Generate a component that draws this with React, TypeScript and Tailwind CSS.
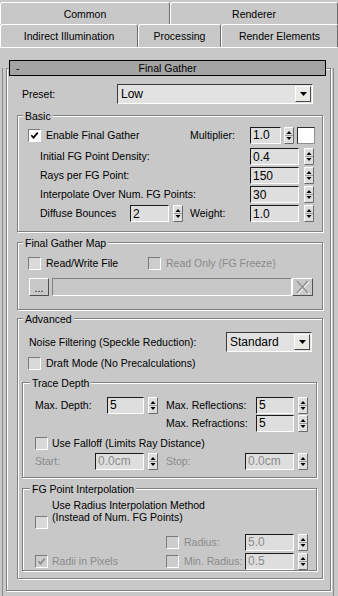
import React from "react";

function Spinner() {
  return (
    <svg width="10" height="17" viewBox="0 0 10 17" className="block shrink-0">
      <rect x="0" y="0" width="10" height="17" fill="#dedede" />
      <path d="M0.5 16.5 H9.5 V0.5" stroke="#6a6a6a" fill="none" />
      <path d="M0.5 16 V0.5 H9" stroke="#ffffff" fill="none" />
      <line x1="1" y1="8.5" x2="9" y2="8.5" stroke="#9a9a9a" />
      <polygon points="2.5,7 7.5,7 5,4" fill="#000" />
      <polygon points="2.5,10 7.5,10 5,13" fill="#000" />
    </svg>
  );
}

function Field({ w, value, disabled }: { w: string; value: string; disabled?: boolean }) {
  return (
    <div
      className={`${w} h-[17px] shrink-0 flex items-center pl-[2px] bg-[#dedede] border border-t-[#1a1a1a] border-l-[#1a1a1a] border-b-white border-r-white text-[12px] leading-[14px] ${
        disabled ? "text-[#8c8c8c]" : "text-black"
      }`}
    >
      {value}
    </div>
  );
}

function Check({ checked, disabled }: { checked?: boolean; disabled?: boolean }) {
  return (
    <div
      className={`w-[13px] h-[13px] shrink-0 flex items-center justify-center border border-t-[#7a7a7a] border-l-[#7a7a7a] border-b-white border-r-white ${
        disabled ? "bg-[#cdcdcd]" : checked ? "bg-white" : "bg-[#d9d9d9]"
      }`}
    >
      {checked && (
        <svg width="9" height="9" viewBox="0 0 9 9" className="block">
          <path d="M1.3 4.2 L3.5 6.6 L7.8 1.6" stroke={disabled ? "#8a8a8a" : "#000"} strokeWidth="1.7" fill="none" />
        </svg>
      )}
    </div>
  );
}

function Dropdown({ w, value }: { w: string; value: string }) {
  return (
    <div
      className={`${w} h-[20px] shrink-0 flex items-center pl-[3px] bg-[#e2e2e2] border border-t-[#3a3a3a] border-l-[#3a3a3a] border-b-white border-r-white text-[12px]`}
    >
      <span className="flex-1">{value}</span>
      <div className="w-[16px] h-[16px] mr-[1px] bg-[#e9e9e5] border border-t-white border-l-white border-b-[#4a4a4a] border-r-[#4a4a4a] flex items-center justify-center">
        <svg width="7" height="4" viewBox="0 0 7 4" className="block">
          <polygon points="0,0 7,0 3.5,4" fill="#000" />
        </svg>
      </div>
    </div>
  );
}

function Group({
  label,
  className,
  labelMl,
  children,
}: {
  label: string;
  className: string;
  labelMl: string;
  children: React.ReactNode;
}) {
  return (
    <div className={`border border-[#808080] shadow-[1px_1px_0_#fff,inset_1px_1px_0_#fff] ${className}`}>
      <div className="h-[14px] -mt-[7px] flex">
        <span className={`${labelMl} px-[2px] bg-[#c8c8c8] leading-[14px]`}>{label}</span>
      </div>
      {children}
    </div>
  );
}

const tab =
  "h-full flex items-center justify-center border-t border-l border-t-white border-l-white border-r border-r-[#6a6a6a] rounded-tl-[3px] rounded-tr-[3px]";

export default function App() {
  return (
    <div className="w-[338px] h-[596px] bg-[#c8c8c8] overflow-hidden text-[10.5px] leading-[13px] text-black font-['Liberation_Sans',Arial,sans-serif]">
      {/* Tabs row 1 */}
      <div className="flex h-[24px] pt-[2px]">
        <div className={`${tab} w-[170px] pt-[2px]`}>Common</div>
        <div className={`${tab} flex-1 pt-[2px]`}>Renderer</div>
      </div>
      {/* Tabs row 2 */}
      <div className="flex h-[23px]">
        <div className={`${tab} w-[138px] relative z-10 bg-[#c8c8c8] h-[24px]`}>Indirect Illumination</div>
        <div className={`${tab} w-[83px]`}>Processing</div>
        <div className={`${tab} flex-1`}>Render Elements</div>
      </div>

      {/* Panel */}
      <div className="border-t border-t-white h-[549px]">
        <div className="ml-[2px] w-[332px] h-full border-l border-r border-[#8a8a8a]">
          {/* Rollout frame */}
          <div className="mt-[20px] ml-[3px] w-[325px] border border-[#808080] shadow-[1px_1px_0_#fff,inset_1px_1px_0_#fff] pb-[11px]">
            {/* Header */}
            <div className="-mt-[9px] ml-[2px] w-[317px] h-[16px] bg-[#a4a4a4] border border-black flex items-center">
              <div className="w-[40px] pl-[6px]">-</div>
              <div className="flex-1 text-center">Final Gather</div>
              <div className="w-[40px]" />
            </div>

            {/* Preset */}
            <div className="mt-[8px] h-[20px] flex items-center">
              <div className="w-[110px] pl-[15px]">Preset:</div>
              <Dropdown w="w-[196px]" value="Low" />
            </div>

            {/* Basic */}
            <Group label="Basic" labelMl="ml-[5px]" className="mt-[11px] ml-[10px] w-[306px] pb-[8px]">
              <div className="mt-[2px] h-[20px] flex items-center">
                <div className="w-[172px] pl-[10px] flex items-center gap-[5px]">
                  <Check checked />
                  <span>Enable Final Gather</span>
                </div>
                <div className="w-[60px]">Multiplier:</div>
                <Field w="w-[31px]" value="1.0" />
                <div className="ml-[3px]">
                  <Spinner />
                </div>
                <div className="ml-[3px] w-[18px] h-[17px] bg-white border border-t-[#303030] border-l-[#303030] border-b-[#909090] border-r-[#909090]" />
              </div>
              <div className="mt-[2px] h-[19px] flex items-center">
                <div className="w-[232px] pl-[22px]">Initial FG Point Density:</div>
                <Field w="w-[49px]" value="0.4" />
                <div className="ml-[5px]">
                  <Spinner />
                </div>
              </div>
              <div className="h-[19px] flex items-center">
                <div className="w-[232px] pl-[22px]">Rays per FG Point:</div>
                <Field w="w-[49px]" value="150" />
                <div className="ml-[5px]">
                  <Spinner />
                </div>
              </div>
              <div className="h-[19px] flex items-center">
                <div className="w-[232px] pl-[22px]">Interpolate Over Num. FG Points:</div>
                <Field w="w-[49px]" value="30" />
                <div className="ml-[5px]">
                  <Spinner />
                </div>
              </div>
              <div className="h-[19px] flex items-center">
                <div className="w-[112px] pl-[22px]">Diffuse Bounces</div>
                <Field w="w-[39px]" value="2" />
                <div className="ml-[4px]">
                  <Spinner />
                </div>
                <div className="ml-[7px] w-[60px]">Weight:</div>
                <Field w="w-[49px]" value="1.0" />
                <div className="ml-[5px]">
                  <Spinner />
                </div>
              </div>
            </Group>

            {/* Final Gather Map */}
            <Group label="Final Gather Map" labelMl="ml-[5px]" className="mt-[10px] ml-[10px] w-[306px] pb-[13px]">
              <div className="mt-[4px] h-[18px] flex items-center">
                <div className="w-[130px] pl-[10px] flex items-center gap-[5px]">
                  <Check />
                  <span>Read/Write File</span>
                </div>
                <div className="flex items-center gap-[5px] text-[#8a8a8a]">
                  <Check disabled />
                  <span>Read Only (FG Freeze)</span>
                </div>
              </div>
              <div className="mt-[6px] h-[18px] flex items-center pl-[11px]">
                <div className="w-[20px] h-[18px] border border-t-white border-l-white border-b-[#505050] border-r-[#505050] flex items-end justify-center pb-[2px] leading-[10px]">
                  ...
                </div>
                <div className="ml-[3px] w-[240px] h-[18px] border border-t-[#808080] border-l-[#808080] border-b-white border-r-white bg-[#c8c8c8]" />
                <div className="w-[21px] h-[18px] border border-t-white border-l-white border-b-[#505050] border-r-[#505050] flex items-center justify-center">
                  <svg width="15" height="14" viewBox="0 0 15 14" className="block">
                    <path d="M2 1 L13 13 M13 1 L2 13" stroke="#ffffff" strokeWidth="1.4" transform="translate(0.8,0.8)" />
                    <path d="M2 1 L13 13 M13 1 L2 13" stroke="#8a8a8a" strokeWidth="1.4" />
                  </svg>
                </div>
              </div>
            </Group>

            {/* Advanced */}
            <Group label="Advanced" labelMl="ml-[5px]" className="mt-[8px] ml-[10px] w-[306px] pb-[7px]">
              <div className="mt-[6px] h-[20px] flex items-center">
                <div className="w-[208px] pl-[11px]">Noise Filtering (Speckle Reduction):</div>
                <Dropdown w="w-[86px]" value="Standard" />
              </div>
              <div className="mt-[2px] h-[18px] flex items-center pl-[10px] gap-[5px]">
                <Check />
                <span>Draft Mode (No Precalculations)</span>
              </div>

              {/* Trace Depth */}
              <Group label="Trace Depth" labelMl="ml-[7px]" className="mt-[10px] ml-[4px] w-[295px] pb-[7px]">
                <div className="mt-[6px] h-[18px] flex items-center">
                  <div className="w-[84px] pl-[12px]">Max. Depth:</div>
                  <Field w="w-[37px]" value="5" />
                  <div className="ml-[4px]">
                    <Spinner />
                  </div>
                  <div className="ml-[8px] w-[90px]">Max. Reflections:</div>
                  <Field w="w-[38px]" value="5" />
                  <div className="ml-[4px]">
                    <Spinner />
                  </div>
                </div>
                <div className="h-[18px] flex items-center">
                  <div className="w-[143px]" />
                  <div className="w-[90px]">Max. Refractions:</div>
                  <Field w="w-[38px]" value="5" />
                  <div className="ml-[4px]">
                    <Spinner />
                  </div>
                </div>
                <div className="mt-[2px] h-[18px] flex items-center pl-[12px] gap-[4px]">
                  <Check />
                  <span>Use Falloff (Limits Ray Distance)</span>
                </div>
                <div className="h-[18px] flex items-center text-[#8a8a8a]">
                  <div className="w-[72px] pl-[12px]">Start:</div>
                  <Field w="w-[49px]" value="0.0cm" disabled />
                  <div className="ml-[4px]">
                    <Spinner />
                  </div>
                  <div className="ml-[8px] w-[79px]">Stop:</div>
                  <Field w="w-[49px]" value="0.0cm" disabled />
                  <div className="ml-[4px]">
                    <Spinner />
                  </div>
                </div>
              </Group>

              {/* FG Point Interpolation */}
              <Group label="FG Point Interpolation" labelMl="ml-[7px]" className="mt-[10px] ml-[4px] w-[295px]">
                <div className="mt-[3px] h-[31px] flex items-start pl-[12px]">
                  <div className="mt-[17px]">
                    <Check />
                  </div>
                  <div className="ml-[4px] leading-[12px]">
                    Use Radius Interpolation Method
                    <br />
                    (Instead of Num. FG Points)
                  </div>
                </div>
                <div className="mt-[3px] h-[18px] flex items-center">
                  <div className="w-[143px]" />
                  <div className="w-[79px] flex items-center gap-[5px] text-[#8a8a8a]">
                    <Check disabled />
                    <span>Radius:</span>
                  </div>
                  <Field w="w-[49px]" value="5.0" disabled />
                  <div className="ml-[4px]">
                    <Spinner />
                  </div>
                </div>
                <div className="mt-[1px] h-[18px] flex items-center">
                  <div className="w-[143px] pl-[12px] flex items-center gap-[4px] text-[#8a8a8a]">
                    <Check checked disabled />
                    <span>Radii in Pixels</span>
                  </div>
                  <div className="w-[79px] flex items-center gap-[5px] text-[#8a8a8a] whitespace-nowrap">
                    <Check disabled />
                    <span>Min. Radius:</span>
                  </div>
                  <Field w="w-[49px]" value="0.5" disabled />
                  <div className="ml-[4px]">
                    <Spinner />
                  </div>
                </div>
              </Group>
            </Group>
          </div>
        </div>
      </div>
    </div>
  );
}
